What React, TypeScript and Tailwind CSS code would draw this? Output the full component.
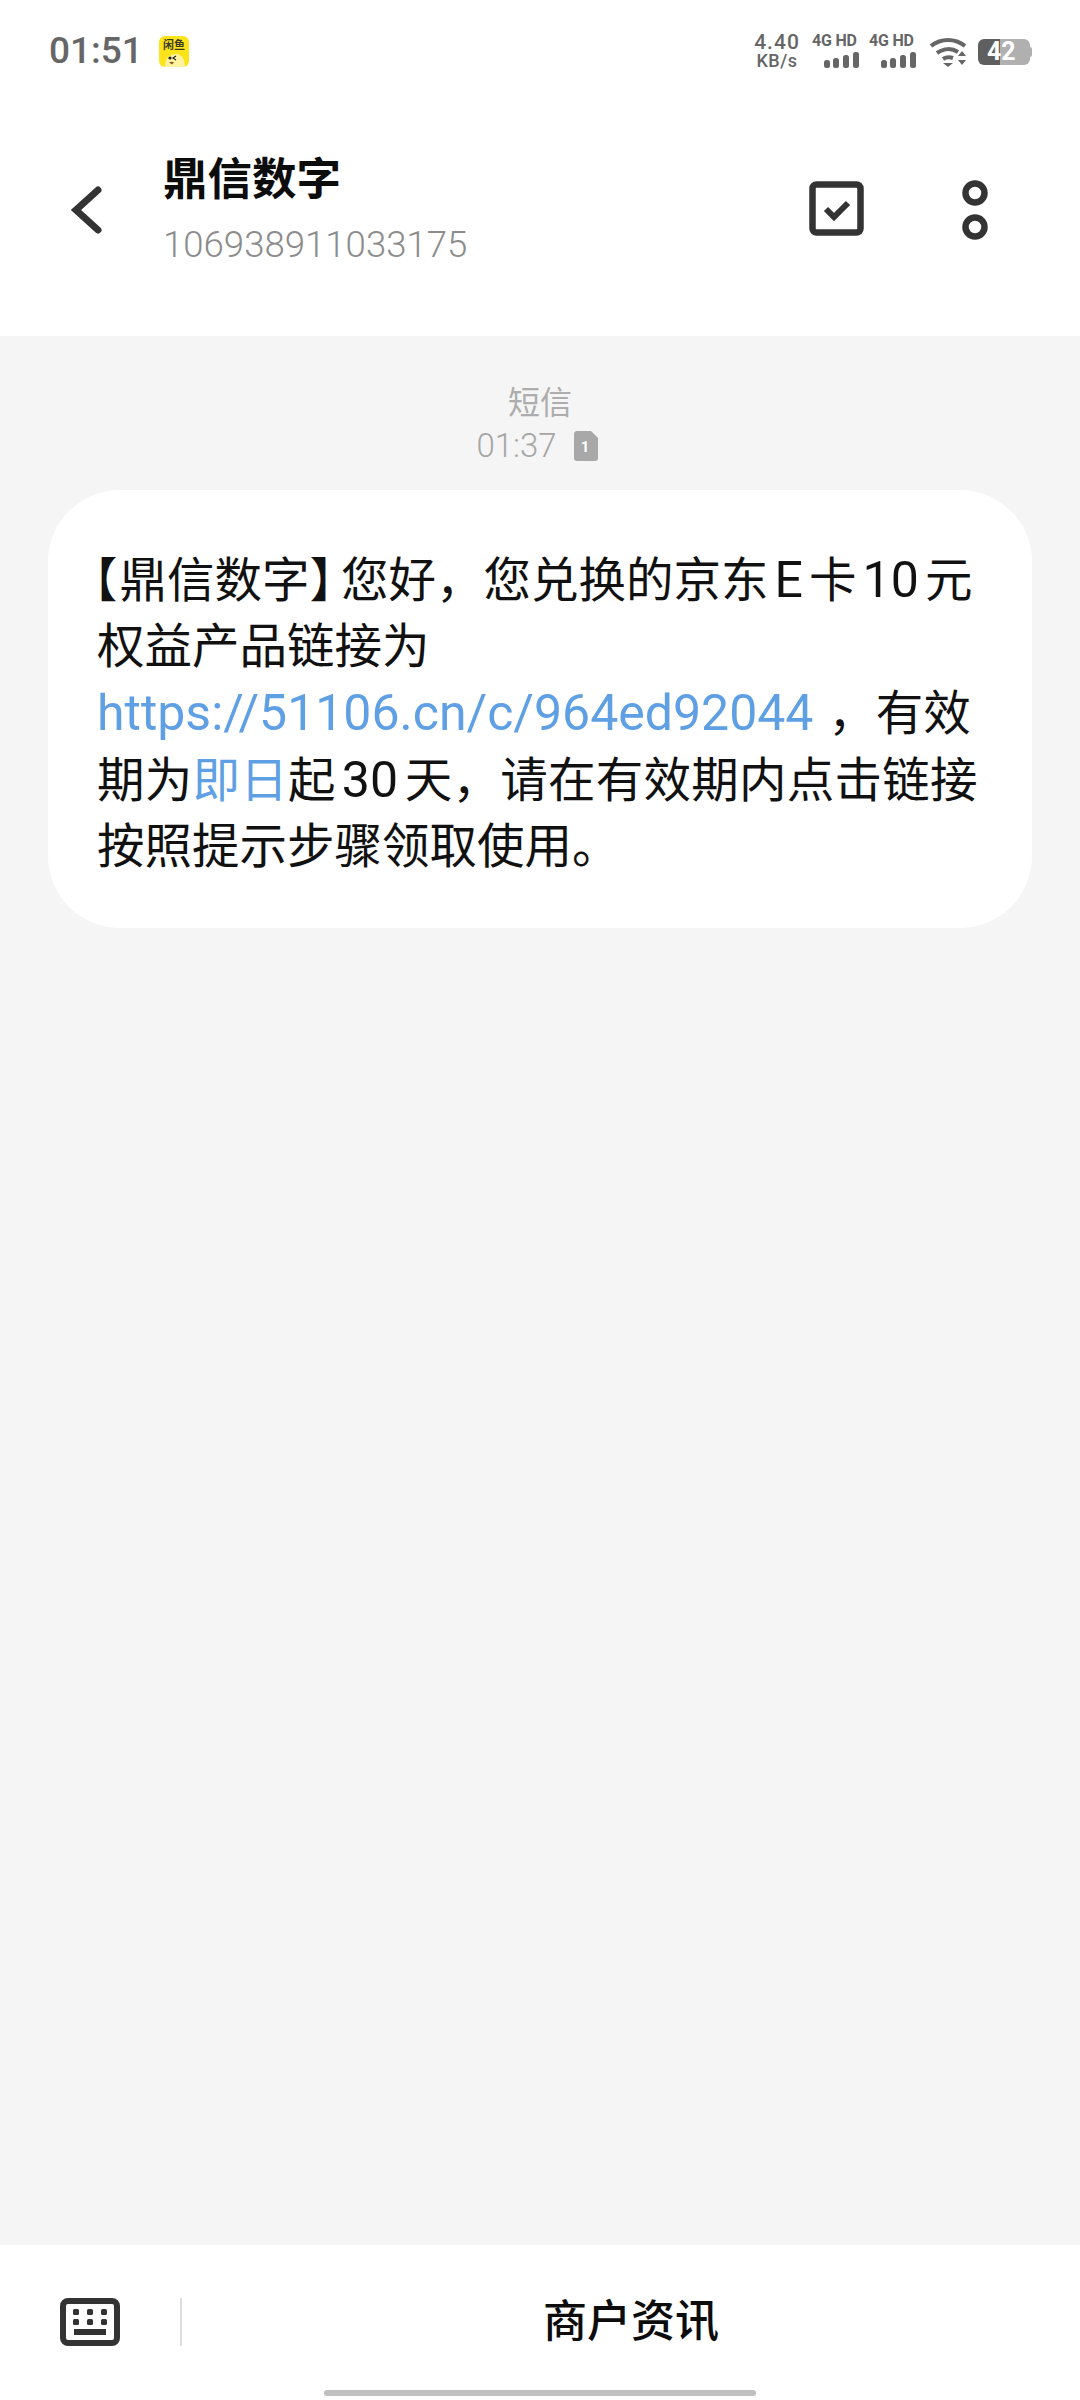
const cjk = "font-['Roboto','Noto_Sans_CJK_SC',sans-serif]";

const Latin = ({ children }: { children: string }) => (
  <span className="text-[50px]">{children}</span>
);

const Bars = () => (
  <div className="flex w-[47px] flex-col">
    <span className="font-['Roboto',sans-serif] text-[16px] leading-[14px] font-bold tracking-[-0.2px] whitespace-nowrap text-[#666666]">4G HD</span>
    <svg width="47" height="18" viewBox="0 0 47 18" className="mt-[2px] block">
      <rect x="12" y="10" width="6" height="8" rx="2.5" fill="#666" />
      <rect x="21" y="8" width="6" height="10" rx="2.5" fill="#666" />
      <rect x="31" y="5" width="6" height="13" rx="2.5" fill="#666" />
      <rect x="41" y="2" width="6" height="16" rx="2.5" fill="#666" />
    </svg>
  </div>
);

const StatusBar = () => (
  <div className="flex h-[100px] items-start justify-between bg-white pl-[49px] pr-[48px] pt-[32px]">
    <div className="flex items-center gap-[16px]">
      <span className="font-['Roboto',sans-serif] text-[37px] leading-[38px] font-medium text-[#666666]">01:51</span>
      <svg width="30" height="31" viewBox="0 0 30 31">
        <rect width="30" height="31" rx="6" fill="#fde31a" />
        <text x="15" y="13" textAnchor="middle" fontFamily="Noto Sans CJK SC" fontSize="11" fontWeight="700" fill="#3a3a20">闲鱼</text>
        <path d="M6 31c0-8 4-13 11-13 6 0 9 6 9 13z" fill="#fff3a0" />
        <circle cx="11" cy="22" r="1.6" fill="#222" />
        <path d="M17 20l-3 2 3 2" stroke="#222" strokeWidth="1.2" fill="none" />
        <path d="M10 26h5l-2 2.5z" fill="#8a4a10" />
      </svg>
    </div>
    <div className="flex items-start">
      <div className="flex w-[50px] flex-col items-center font-['Roboto',sans-serif] font-medium text-[#666666]">
        <span className="text-[21px] leading-[20px] tracking-[1px]">4.40</span>
        <span className="text-[18px] leading-[17px] tracking-[0.5px]">KB/s</span>
      </div>
      <div className="ml-[10px] mt-[2px]"><Bars /></div>
      <div className="ml-[10px] mt-[2px]"><Bars /></div>
      <svg width="38" height="30" viewBox="0 0 38 30" className="ml-[13px] mt-[5px]">
        <path d="M2 9c10-8 24-8 34 0" stroke="#666" strokeWidth="4" fill="none" />
        <path d="M8 16c7-5 15-5 21-1" stroke="#666" strokeWidth="4" fill="none" />
        <path d="M14 22c3-2 7-2 10-1" stroke="#666" strokeWidth="4" fill="none" />
        <path d="M14 26h10l-5 4z" fill="#666" />
        <path d="M30 16l4-5 4 5zM30 20h8l-4 5z" transform="translate(-1 3)" fill="#666" />
      </svg>
      <div className="relative ml-[11px] mt-[7px] flex h-[26px] items-center">
        <div className="h-[26px] w-[22px] rounded-l-[6px] bg-[#5f5f5f]" />
        <div className="h-[26px] w-[30px] rounded-r-[6px] bg-[#b0b0b0]" />
        <div className="h-[10px] w-[2px] rounded-r-[2px] bg-[#b0b0b0]" />
        <span className="absolute left-[9px] top-0 font-['Roboto',sans-serif] text-[25px] leading-[26px] font-bold text-white">42</span>
      </div>
    </div>
  </div>
);

const Header = () => (
  <div className="flex h-[236px] items-start bg-white">
    <svg width="36" height="52" viewBox="0 0 36 52" className="ml-[69px] mt-[84px]">
      <path d="M29 6L7 26l22 20" stroke="#333333" strokeWidth="7" fill="none" strokeLinecap="round" strokeLinejoin="miter" />
    </svg>
    <div className="ml-[58px] mt-[54px] flex flex-col">
      <span className={`${cjk} text-[44.5px] leading-[52px] font-bold text-[#0c0c0c]`}>鼎信数字</span>
      <span className="mt-[17px] font-['Roboto',sans-serif] text-[36.6px] leading-[44px] font-light text-[#8c8c8c]">106938911033175</span>
    </div>
    <svg width="56" height="56" viewBox="0 0 56 56" className="ml-auto mr-[-1px] mt-[81px]">
      <rect x="3.5" y="3.5" width="48" height="48" rx="4" stroke="#333333" strokeWidth="6.5" fill="none" />
      <path d="M17 28l8 8 14-14" stroke="#333333" strokeWidth="6" fill="none" />
    </svg>
    <svg width="28" height="62" viewBox="0 0 28 62" className="ml-[97px] mr-[91px] mt-[79px]">
      <circle cx="14" cy="14" r="9.5" stroke="#333333" strokeWidth="6.5" fill="none" />
      <circle cx="14" cy="48" r="9.5" stroke="#333333" strokeWidth="6.5" fill="none" />
    </svg>
  </div>
);

const Bubble = () => (
  <div className={`${cjk} mx-[48px] mt-[24px] h-[438px] rounded-[72px] bg-white pl-[49px] pt-[57px] text-[47.5px] leading-[66px] whitespace-nowrap text-[#111111] [text-autospace:normal]`}>
    <div>
      <span className="ml-[-27px] mr-[2px]">【</span>鼎信数字<span className="mr-[-16px]">】</span>您好，您兑换的京东<Latin>E</Latin>卡<Latin>10</Latin>元
    </div>
    <div>权益产品链接为</div>
    <div><span className="text-[50px] text-[#5f9fe3]">https://51106.cn/c/964ed92044</span> <span className="ml-[3px]">，有效</span></div>
    <div className="tracking-[0.25px]">期为<span className="text-[#5f9fe3]">即日</span>起<Latin>30</Latin>天，请在有效期内点击链接</div>
    <div>按照提示步骤领取使用。</div>
  </div>
);

const Thread = () => (
  <div className="flex-1 bg-[#f5f5f5]">
    <div className={`${cjk} flex flex-col items-center pt-[42px] text-[#adadad]`}>
      <span className="text-[32px] leading-[50px]">短信</span>
      <div className="flex h-[38px] items-center pr-[6px]">
        <span className="mt-[-2px] font-['Roboto',sans-serif] text-[33px] leading-[38px] font-light text-[#a6a6a6]">01:37</span>
        <svg width="24" height="30" viewBox="0 0 24 30" className="ml-[17px] mt-[-3px]">
          <path d="M3 0h14l7 7v20a3 3 0 0 1-3 3H3a3 3 0 0 1-3-3V3a3 3 0 0 1 3-3z" fill="#a8a8a8" />
          <text x="11" y="21" textAnchor="middle" fontFamily="Roboto" fontWeight="700" fontSize="15" fill="#fff">1</text>
        </svg>
      </div>
    </div>
    <Bubble />
  </div>
);

const BottomBar = () => (
  <div className="relative h-[155px] bg-white">
    <div className="flex h-[101px] items-end">
      <svg width="60" height="48" viewBox="0 0 60 48" className="ml-[60px]">
        <rect x="3" y="3" width="54" height="42" rx="5" stroke="#333333" strokeWidth="6" fill="none" />
        <rect x="13" y="11" width="6" height="6" rx="1.5" fill="#333333" />
        <rect x="27" y="11" width="6" height="6" rx="1.5" fill="#333333" />
        <rect x="41" y="11" width="6" height="6" rx="1.5" fill="#333333" />
        <rect x="13" y="21" width="6" height="6" rx="1.5" fill="#333333" />
        <rect x="27" y="21" width="6" height="6" rx="1.5" fill="#333333" />
        <rect x="41" y="21" width="6" height="6" rx="1.5" fill="#333333" />
        <rect x="14" y="31" width="32" height="6" fill="#333333" />
      </svg>
      <div className="ml-[60px] h-[48px] w-[2px] bg-[#dedede]" />
      <div className={`${cjk} flex h-[48px] flex-1 items-center justify-center text-[44px] leading-[48px] font-medium text-[#0c0c0c]`}>商户资讯</div>
    </div>
    <div className="absolute bottom-[4px] left-[324px] h-[6px] w-[432px] rounded-full bg-[#bfbfbf]" />
  </div>
);

export default function App() {
  return (
    <div className="flex h-[2400px] w-[1080px] flex-col overflow-hidden bg-white">
      <StatusBar />
      <Header />
      <Thread />
      <BottomBar />
    </div>
  );
}
